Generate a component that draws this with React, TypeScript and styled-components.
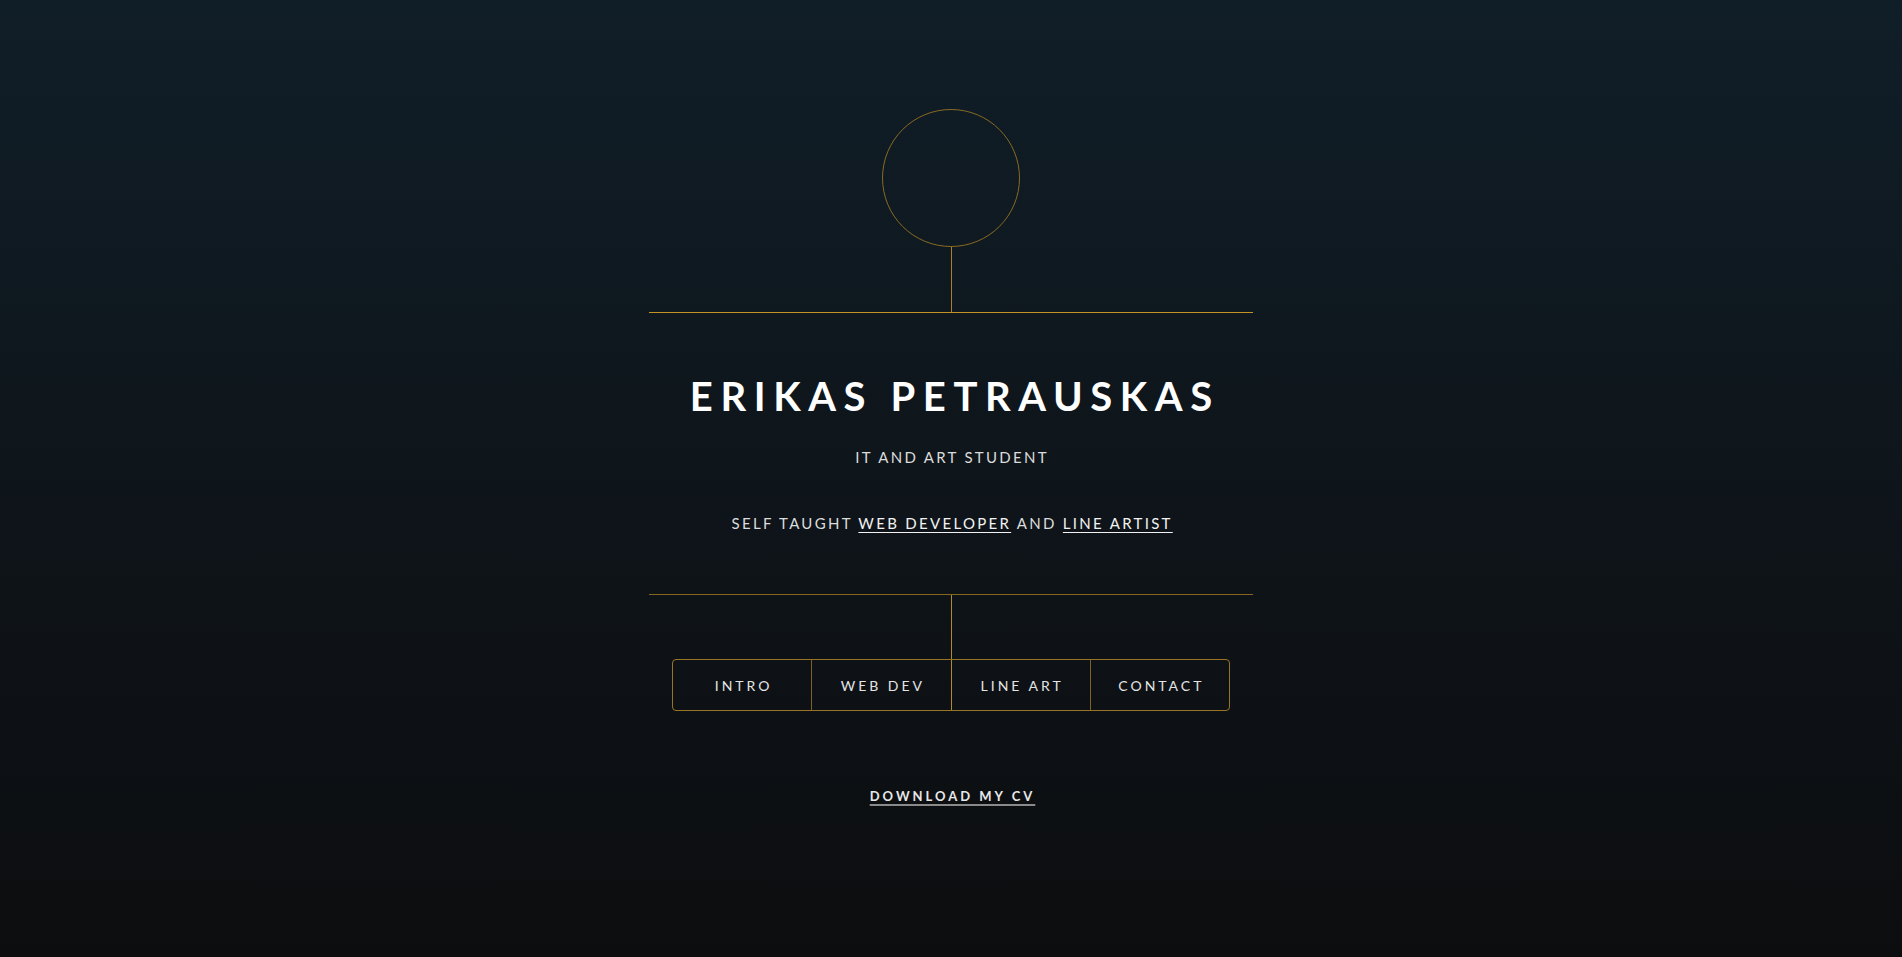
import React from 'react';
import styled, { createGlobalStyle } from 'styled-components';

const GlobalStyle = createGlobalStyle`
  html, body {
    margin: 0;
    padding: 0;
    height: 100%;
  }
  body {
    background: linear-gradient(to bottom, #101e28 0%, #0e1419 55%, #0c0d0f 100%);
    font-family: Lato, 'Liberation Sans', sans-serif;
    color: #fff;
  }
`;

const Page = styled.main`
  min-height: 957px;
  display: flex;
  flex-direction: column;
  align-items: center;
  padding-top: 109px;
  box-sizing: border-box;
`;

const Avatar = styled.div`
  width: 138px;
  height: 138px;
  border-radius: 50%;
  border: 1px solid #8a6a22;
  box-sizing: border-box;
`;

const Stem = styled.div<{ $h: number; $color?: string }>`
  width: 1px;
  height: ${p => p.$h}px;
  background: ${p => p.$color || '#a8822a'};
`;

const Rule = styled.div<{ $color: string; $thick?: number }>`
  width: 604px;
  height: ${p => p.$thick || 1}px;
  background: ${p => p.$color};
`;

const Name = styled.h1`
  margin: 59px 0 0;
  font-size: 40px;
  line-height: 48px;
  font-weight: 700;
  letter-spacing: 7.6px;
  padding-left: 7.6px;
  color: #fff;
`;

const Subtitle = styled.p`
  margin: 28px 0 0;
  font-size: 15px;
  line-height: 18px;
  letter-spacing: 2.3px;
  padding-left: 2.3px;
  color: #dcdcdc;
`;

const Tagline = styled.p`
  margin: 48px 0 62px;
  font-size: 15px;
  line-height: 18px;
  letter-spacing: 2.3px;
  padding-left: 2.3px;
  color: #dcdcdc;
`;

const TagLink = styled.a`
  color: #f2f2f2;
  text-decoration: underline;
  text-underline-offset: 3px;
  text-decoration-thickness: 1px;
`;

const Nav = styled.nav`
  display: flex;
  width: 558px;
  height: 52px;
  box-sizing: border-box;
  border: 1px solid #9a7425;
  border-radius: 4px;
`;

const NavItem = styled.a<{ $divider?: 'dim' | 'bright' }>`
  flex: 1;
  display: flex;
  align-items: center;
  justify-content: center;
  font-size: 14px;
  letter-spacing: 3px;
  padding-left: 3px;
  color: #e4e4e4;
  text-decoration: none;
  border-left: ${p =>
    p.$divider === 'bright'
      ? '1px solid #b18a2c'
      : p.$divider === 'dim'
      ? '1px solid #7f6222'
      : 'none'};
`;

const Download = styled.a`
  margin-top: 77px;
  font-size: 13px;
  line-height: 16px;
  font-weight: 700;
  letter-spacing: 3px;
  padding-left: 3px;
  color: #e8e8e8;
  text-decoration: underline;
  text-decoration-color: #8a8a8a;
  text-decoration-thickness: 2px;
  text-underline-offset: 3px;
`;

export default function App() {
  return (
    <>
      <GlobalStyle />
      <Page>
        <Avatar />
        <Stem $h={65} />
        <Rule $color="#c49322" />
        <Name>ERIKAS PETRAUSKAS</Name>
        <Subtitle>IT AND ART STUDENT</Subtitle>
        <Tagline>
          SELF TAUGHT <TagLink href="#">WEB DEVELOPER</TagLink> AND{' '}
          <TagLink href="#">LINE ARTIST</TagLink>
        </Tagline>
        <Rule $color="#85661f" $thick={1} />
        <Stem $h={64} $color="#b38a2b" />
        <Nav>
          <NavItem href="#">INTRO</NavItem>
          <NavItem href="#" $divider="dim">WEB DEV</NavItem>
          <NavItem href="#" $divider="bright">LINE ART</NavItem>
          <NavItem href="#" $divider="dim">CONTACT</NavItem>
        </Nav>
        <Download href="#">DOWNLOAD MY CV</Download>
      </Page>
    </>
  );
}
